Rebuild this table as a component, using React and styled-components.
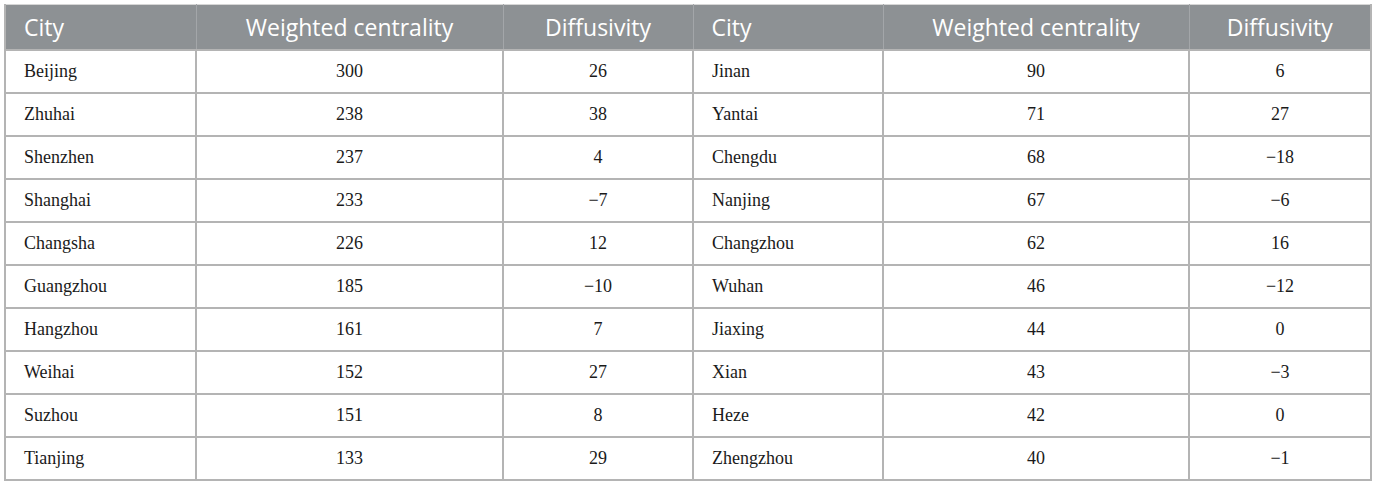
import React from 'react'
import styled, { createGlobalStyle } from 'styled-components'

const rows = [
    ['Beijing', 300, '26', 'Jinan', 90, '6'],
    ['Zhuhai', 238, '38', 'Yantai', 71, '27'],
    ['Shenzhen', 237, '4', 'Chengdu', 68, '\u221218'],
    ['Shanghai', 233, '\u22127', 'Nanjing', 67, '\u22126'],
    ['Changsha', 226, '12', 'Changzhou', 62, '16'],
    ['Guangzhou', 185, '\u221210', 'Wuhan', 46, '\u221212'],
    ['Hangzhou', 161, '7', 'Jiaxing', 44, '0'],
    ['Weihai', 152, '27', 'Xian', 43, '\u22123'],
    ['Suzhou', 151, '8', 'Heze', 42, '0'],
    ['Tianjing', 133, '29', 'Zhengzhou', 40, '\u22121'],
]

const widths = [191, 307, 190, 190, 306, 182]
const heads = ['City', 'Weighted centrality', 'Diffusivity', 'City', 'Weighted centrality', 'Diffusivity']

function App() {
    return (
        <>
            <GlobalStyle />
            <Table>
                <colgroup>
                    {widths.map((w, i) => <col key={i} style={{ width: w }} />)}
                </colgroup>
                <thead>
                    <tr>
                        {heads.map((h, i) => (
                            <Th key={i} $left={i % 3 === 0}>{h}</Th>
                        ))}
                    </tr>
                </thead>
                <tbody>
                    {rows.map((r, ri) => (
                        <tr key={ri}>
                            {r.map((c, ci) => (
                                <Td key={ci} $left={ci % 3 === 0}>{c}</Td>
                            ))}
                        </tr>
                    ))}
                </tbody>
            </Table>
        </>
    )
}

export default App

const GlobalStyle = createGlobalStyle`
    body {
        margin: 0;
        background: #fff;
    }
`

const Table = styled.table`
    margin: 4px 0 0 4px;
    width: 1366px;
    table-layout: fixed;
    border-collapse: collapse;
    border: 2px solid #b4b4b4;
    border-top: 1px solid #d6d6d6;
`

const Th = styled.th`
    height: 45px;
    box-sizing: border-box;
    padding: 0 18px;
    background: #8d9194;
    color: #fff;
    font-family: "Open Sans", sans-serif;
    font-weight: 400;
    font-size: 23px;
    text-align: ${p => (p.$left ? 'left' : 'center')};
    border-left: 1px solid #a3a6a9;
    white-space: nowrap;
`

const Td = styled.td`
    height: 43px;
    box-sizing: border-box;
    padding: 0 18px;
    font-family: "Liberation Serif", "Times New Roman", serif;
    font-size: 18px;
    color: #1a1a1a;
    text-align: ${p => (p.$left ? 'left' : 'center')};
    border: 2px solid #b4b4b4;
    border-bottom-width: 0;
`
